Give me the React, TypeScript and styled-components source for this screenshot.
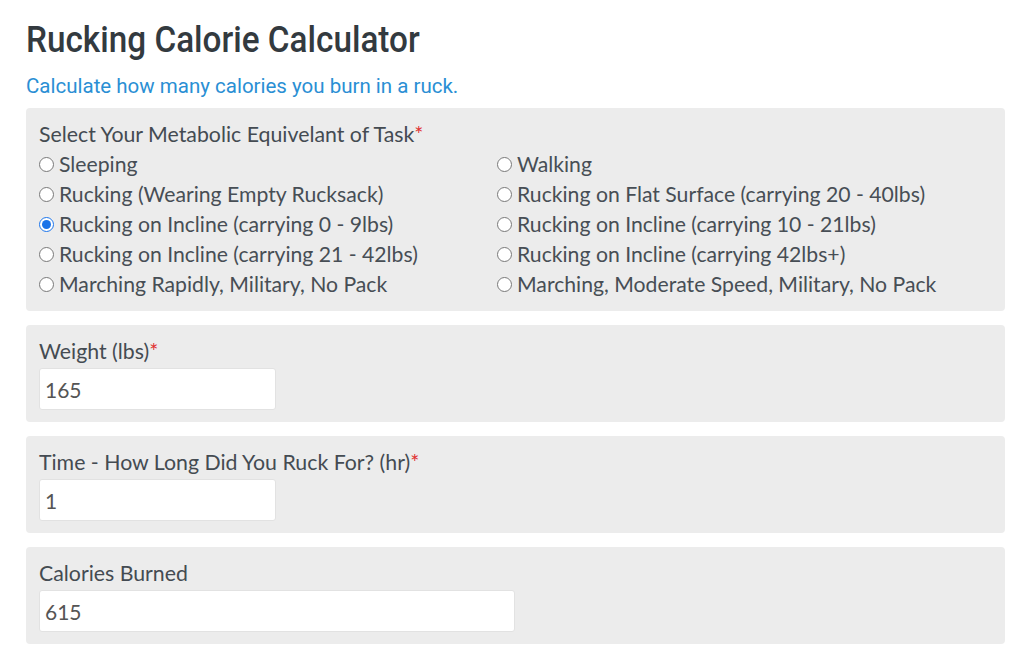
import React from "react";
import styled, { createGlobalStyle } from "styled-components";

const Global = createGlobalStyle`
  html, body { margin: 0; padding: 0; background: #ffffff; }
  body { font-family: Lato, "Noto Sans", sans-serif; color: #444; }
  * { box-sizing: border-box; }
`;

const Page = styled.div`
  padding: 20px 19px 0 26px;
  width: 1024px;
`;

const Title = styled.h1`
  margin: 0;
  font-family: Roboto, "Liberation Sans", sans-serif;
  font-weight: 500;
  font-size: 36px;
  line-height: 40px;
  color: #333a3f;
  transform: scaleX(0.925);
  transform-origin: left center;
  white-space: nowrap;
`;

const Subtitle = styled.p`
  margin: 14px 0 10px;
  font-family: Roboto, "Liberation Sans", sans-serif;
  font-size: 20.5px;
  line-height: 24px;
  color: #2a8fd4;
`;

const Card = styled.div`
  background: #ececec;
  border-radius: 4px;
  padding: 13px 13px 12px;
  margin-bottom: 14px;
`;

const Label = styled.div<{ $gap?: number }>`
  font-size: 21.3px;
  line-height: 26px;
  color: #444b52;
  margin-bottom: ${(p) => (p.$gap ?? 4)}px;
  white-space: nowrap;
`;

const Req = styled.span`
  color: #e03030;
`;

const RadioGrid = styled.div`
  display: grid;
  grid-template-columns: 458px 1fr;
  grid-auto-rows: 30px;
`;

const Option = styled.label`
  display: flex;
  align-items: center;
  gap: 5px;
  font-size: 21.2px;
  color: #474e55;
  white-space: nowrap;
`;

const Radio = styled.input`
  margin: 0;
  width: 15px;
  height: 15px;
  accent-color: #1a73e8;
`;

const Field = styled.input<{ $w: number }>`
  display: block;
  width: ${(p) => p.$w}px;
  height: 42px;
  border: 1px solid #e2e2e2;
  border-radius: 3px;
  background: #fff;
  padding: 0 5px;
  font-family: Lato, "Noto Sans", sans-serif;
  font-size: 21px;
  color: #555;
  outline: none;
`;

const left = [
  "Sleeping",
  "Rucking (Wearing Empty Rucksack)",
  "Rucking on Incline (carrying 0 - 9lbs)",
  "Rucking on Incline (carrying 21 - 42lbs)",
  "Marching Rapidly, Military, No Pack",
];
const right = [
  "Walking",
  "Rucking on Flat Surface (carrying 20 - 40lbs)",
  "Rucking on Incline (carrying 10 - 21lbs)",
  "Rucking on Incline (carrying 42lbs+)",
  "Marching, Moderate Speed, Military, No Pack",
];

const options: string[] = [];
left.forEach((l, i) => {
  options.push(l);
  options.push(right[i]);
});

export default function App() {
  return (
    <>
      <Global />
      <Page>
        <Title>Rucking Calorie Calculator</Title>
        <Subtitle>Calculate how many calories you burn in a ruck.</Subtitle>
        <Card>
          <Label $gap={2}>
            Select Your Metabolic Equivelant of Task<Req>*</Req>
          </Label>
          <RadioGrid>
            {options.map((o) => (
              <Option key={o}>
                <Radio
                  type="radio"
                  name="met"
                  defaultChecked={o === "Rucking on Incline (carrying 0 - 9lbs)"}
                />
                {o}
              </Option>
            ))}
          </RadioGrid>
        </Card>
        <Card>
          <Label>
            Weight (lbs)<Req>*</Req>
          </Label>
          <Field $w={237} defaultValue="165" />
        </Card>
        <Card>
          <Label>
            Time - How Long Did You Ruck For? (hr)<Req>*</Req>
          </Label>
          <Field $w={237} defaultValue="1" />
        </Card>
        <Card>
          <Label>Calories Burned</Label>
          <Field $w={476} defaultValue="615" />
        </Card>
      </Page>
    </>
  );
}
